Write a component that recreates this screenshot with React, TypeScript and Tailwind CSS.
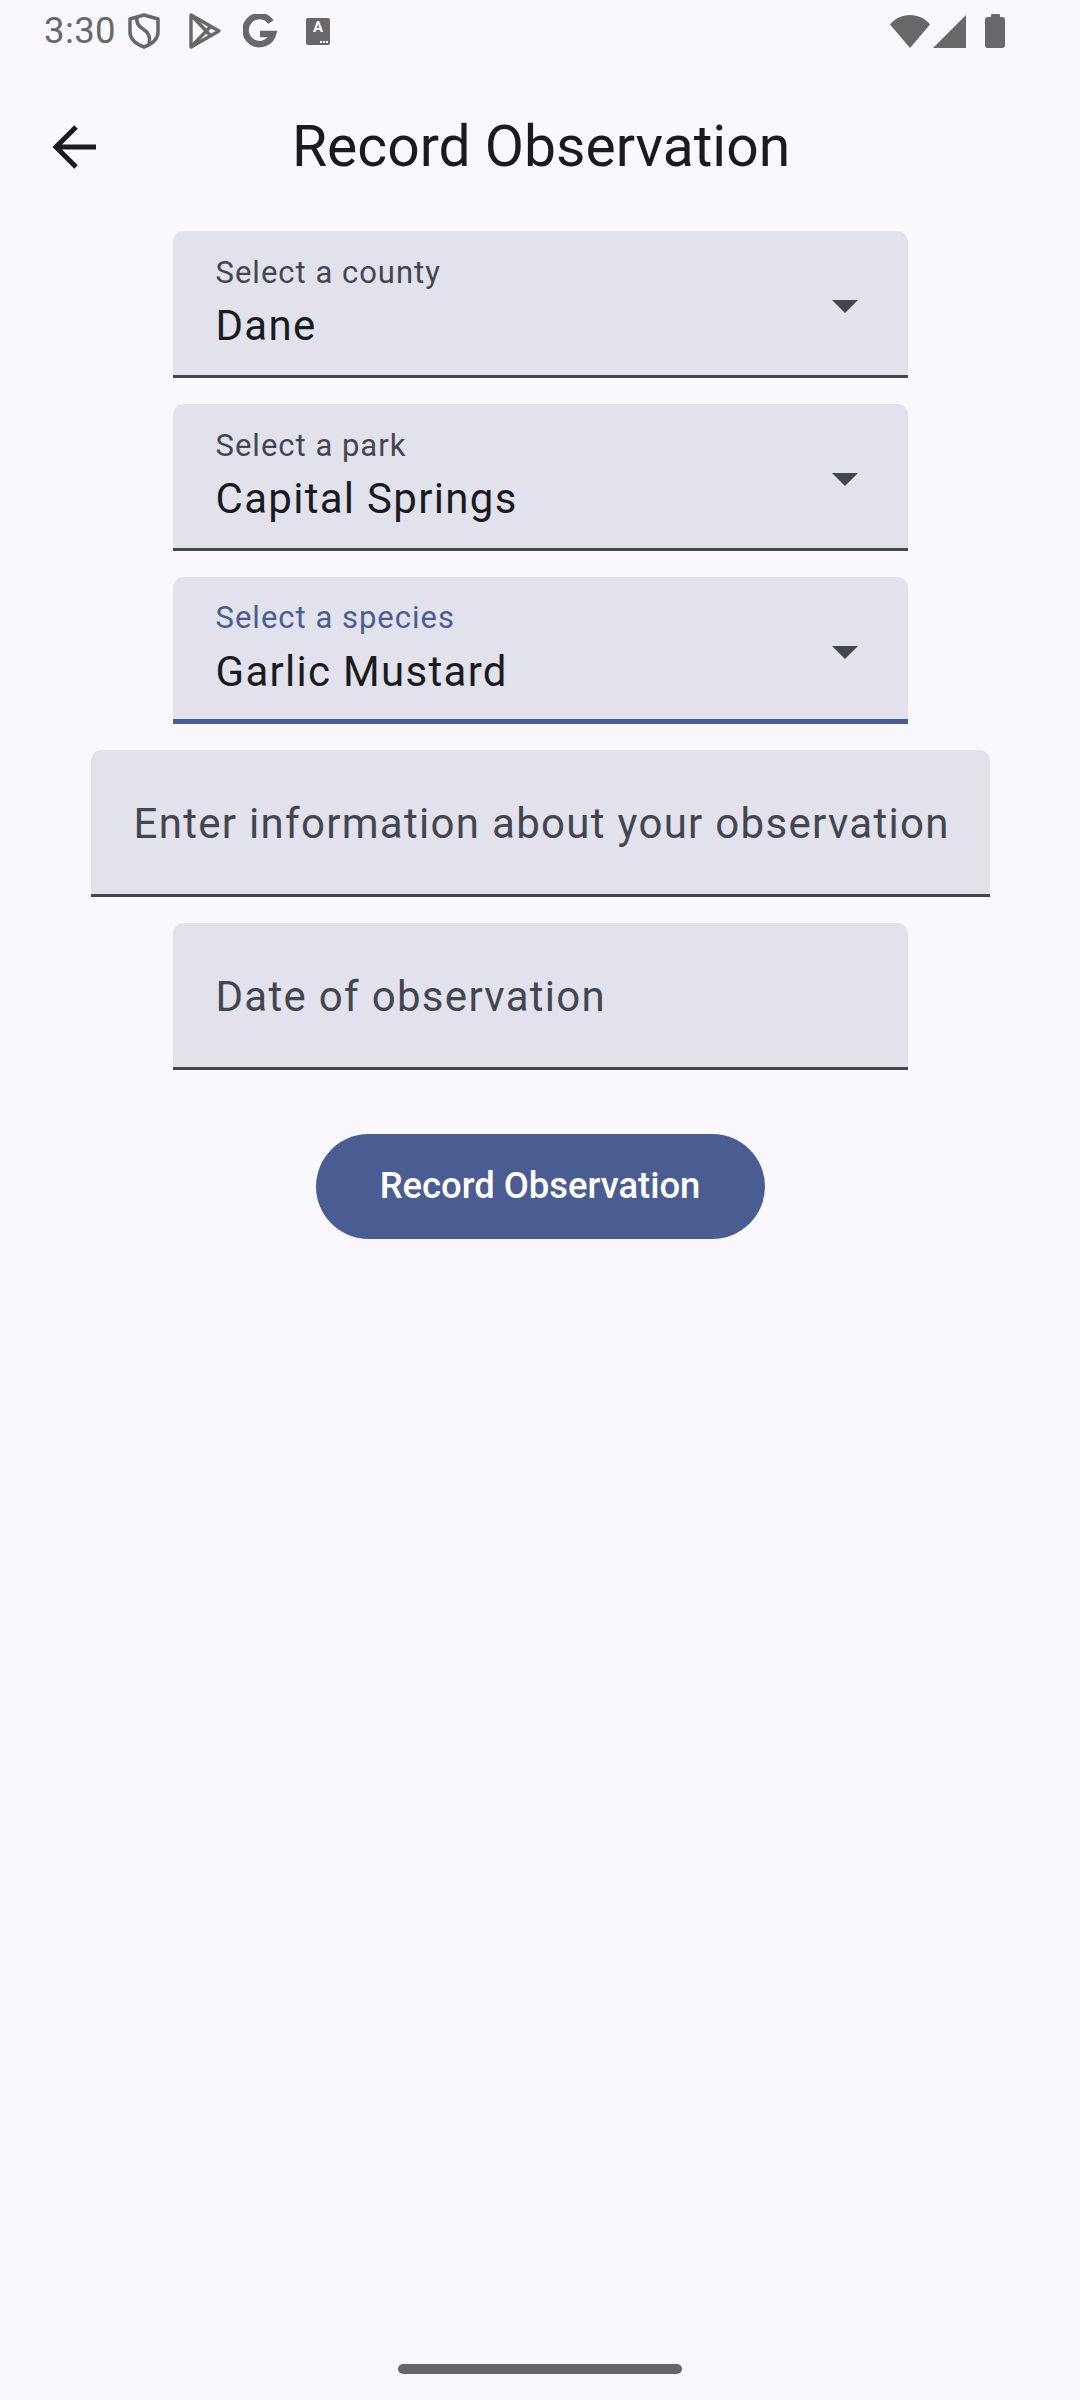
import React from 'react';

const Caret = ({ focused }: { focused?: boolean }) => (
  <svg width="28" height="14" viewBox="0 0 28 14" className={`mr-[2px] shrink-0 ${focused ? 'mt-[8px]' : 'mt-[6px]'}`}>
    <path d="M1 1h26L14 14z" fill="#44464f" />
  </svg>
);

const StatusBar = () => (
  <div className="flex h-[62px] items-center pr-[75px] pl-[44px] text-[#68686b]">
    <span className="w-[80px] text-[36.5px] leading-none tracking-[0.4px]">3:30</span>
    <svg width="32" height="36" viewBox="0 0 32 36" className="ml-[4px]" fill="none" stroke="currentColor">
      <path d="M16 2 30 6v13c0 7-6 12-14 15C8 31 2 26 2 19V6z" strokeWidth="3.500" strokeLinejoin="round" />
      <path d="M9 4c-1 5 1 9 6 12s8 7 6 15" strokeWidth="3.500" />
    </svg>
    <svg width="34" height="38" viewBox="0 0 34 38" className="ml-[28px]" fill="none" stroke="currentColor" strokeWidth="3.4" strokeLinejoin="round">
      <path d="M3 3 31 19 3 35z" />
      <path d="M3 3 23 24M3 35 23 14" />
    </svg>
    <svg width="34" height="34" viewBox="0 0 34 34" className="ml-[21px]" fill="none" stroke="currentColor" strokeWidth="6.5">
      <path d="M28 8A14 14 0 1 0 30 20H17" />
    </svg>
    <div className="relative ml-[29px] flex h-[27px] w-[24px] items-start justify-center rounded-[2px] bg-[#68686b]">
      <span className="text-[15px] leading-[19px] font-bold text-[#f9f8ff]">A</span>
      <div className="absolute right-[2px] bottom-[2px] flex gap-[1px]">
        <i className="h-[2px] w-[2px] bg-[#f9f8ff]" />
        <i className="h-[2px] w-[2px] bg-[#f9f8ff]" />
        <i className="h-[2px] w-[2px] bg-[#f9f8ff]" />
      </div>
    </div>
    <div className="flex-1" />
    <svg width="40" height="33" viewBox="0 0 40 33" fill="currentColor">
      <path d="M0 9.5C5 3.500 12 0 20 0s15 3.500 20 9.500L20 33z" />
    </svg>
    <svg width="33" height="33" viewBox="0 0 33 33" className="ml-[3px]" fill="currentColor">
      <path d="M33 0v33H0z" />
    </svg>
    <div className="ml-[19px] flex flex-col items-center">
      <div className="h-[3px] w-[9px] rounded-t-[1px] bg-[#68686b]" />
      <div className="h-[31px] w-[20px] rounded-[3px] bg-[#68686b]" />
    </div>
  </div>
);

const Field = ({ label, value, focused, wide }: { label: string; value?: string; focused?: boolean; wide?: boolean }) => (
  <div
    className={`flex h-[147px] items-center rounded-t-[11px] bg-[#e1e2ec] pr-[47px] pl-[43px] ${
      wide ? 'w-[899px]' : 'w-[735px]'
    } ${focused ? 'border-b-[5px] border-[#4a5d92]' : 'border-b-[3px] border-[#44464f]'}`}
  >
    {value ? (
      <>
        <div className="flex-1 pt-[1px]">
          <div className={`text-[31px] leading-[36px] tracking-[1px] ${focused ? 'text-[#4a5d92]' : 'text-[#44464f]'}`}>
            {label}
          </div>
          <div className={`text-[42px] leading-[52px] tracking-[1.3px] text-[#1a1b21] ${focused ? 'mt-[10px]' : 'mt-[9px]'}`}>
            {value}
          </div>
        </div>
        <Caret focused={focused} />
      </>
    ) : (
      <span className="pt-[2px] text-[42px] tracking-[1.3px] whitespace-nowrap text-[#44464f]">{label}</span>
    )}
  </div>
);

export default function App() {
  return (
    <div className="flex h-[2400px] w-[1080px] flex-col bg-[#f9f8ff] font-['Roboto',sans-serif]">
      <StatusBar />
      <div className="flex h-[169px] items-center pl-[50px]">
        <svg width="50" height="48" viewBox="0 0 50 48" fill="none" stroke="#1a1b21" strokeWidth="5">
          <path d="M46 24H7M26 4 6 24l20 20" />
        </svg>
        <h1 className="ml-[192px] text-[57px] leading-none whitespace-nowrap text-[#1a1b21]">Record Observation</h1>
      </div>
      <div className="flex flex-col items-center gap-[26px]">
        <Field label="Select a county" value="Dane" />
        <Field label="Select a park" value="Capital Springs" />
        <Field label="Select a species" value="Garlic Mustard" focused />
        <Field label="Enter information about your observation" wide />
        <Field label="Date of observation" />
        <button className="mt-[38px] flex h-[105px] w-[449px] items-center justify-center rounded-full bg-[#4a5d92] text-[36.4px] font-medium text-white">
          Record Observation
        </button>
      </div>
      <div className="flex-1" />
      <div className="mb-[26px] h-[10px] w-[284px] self-center rounded-full bg-[#666666]" />
    </div>
  );
}
